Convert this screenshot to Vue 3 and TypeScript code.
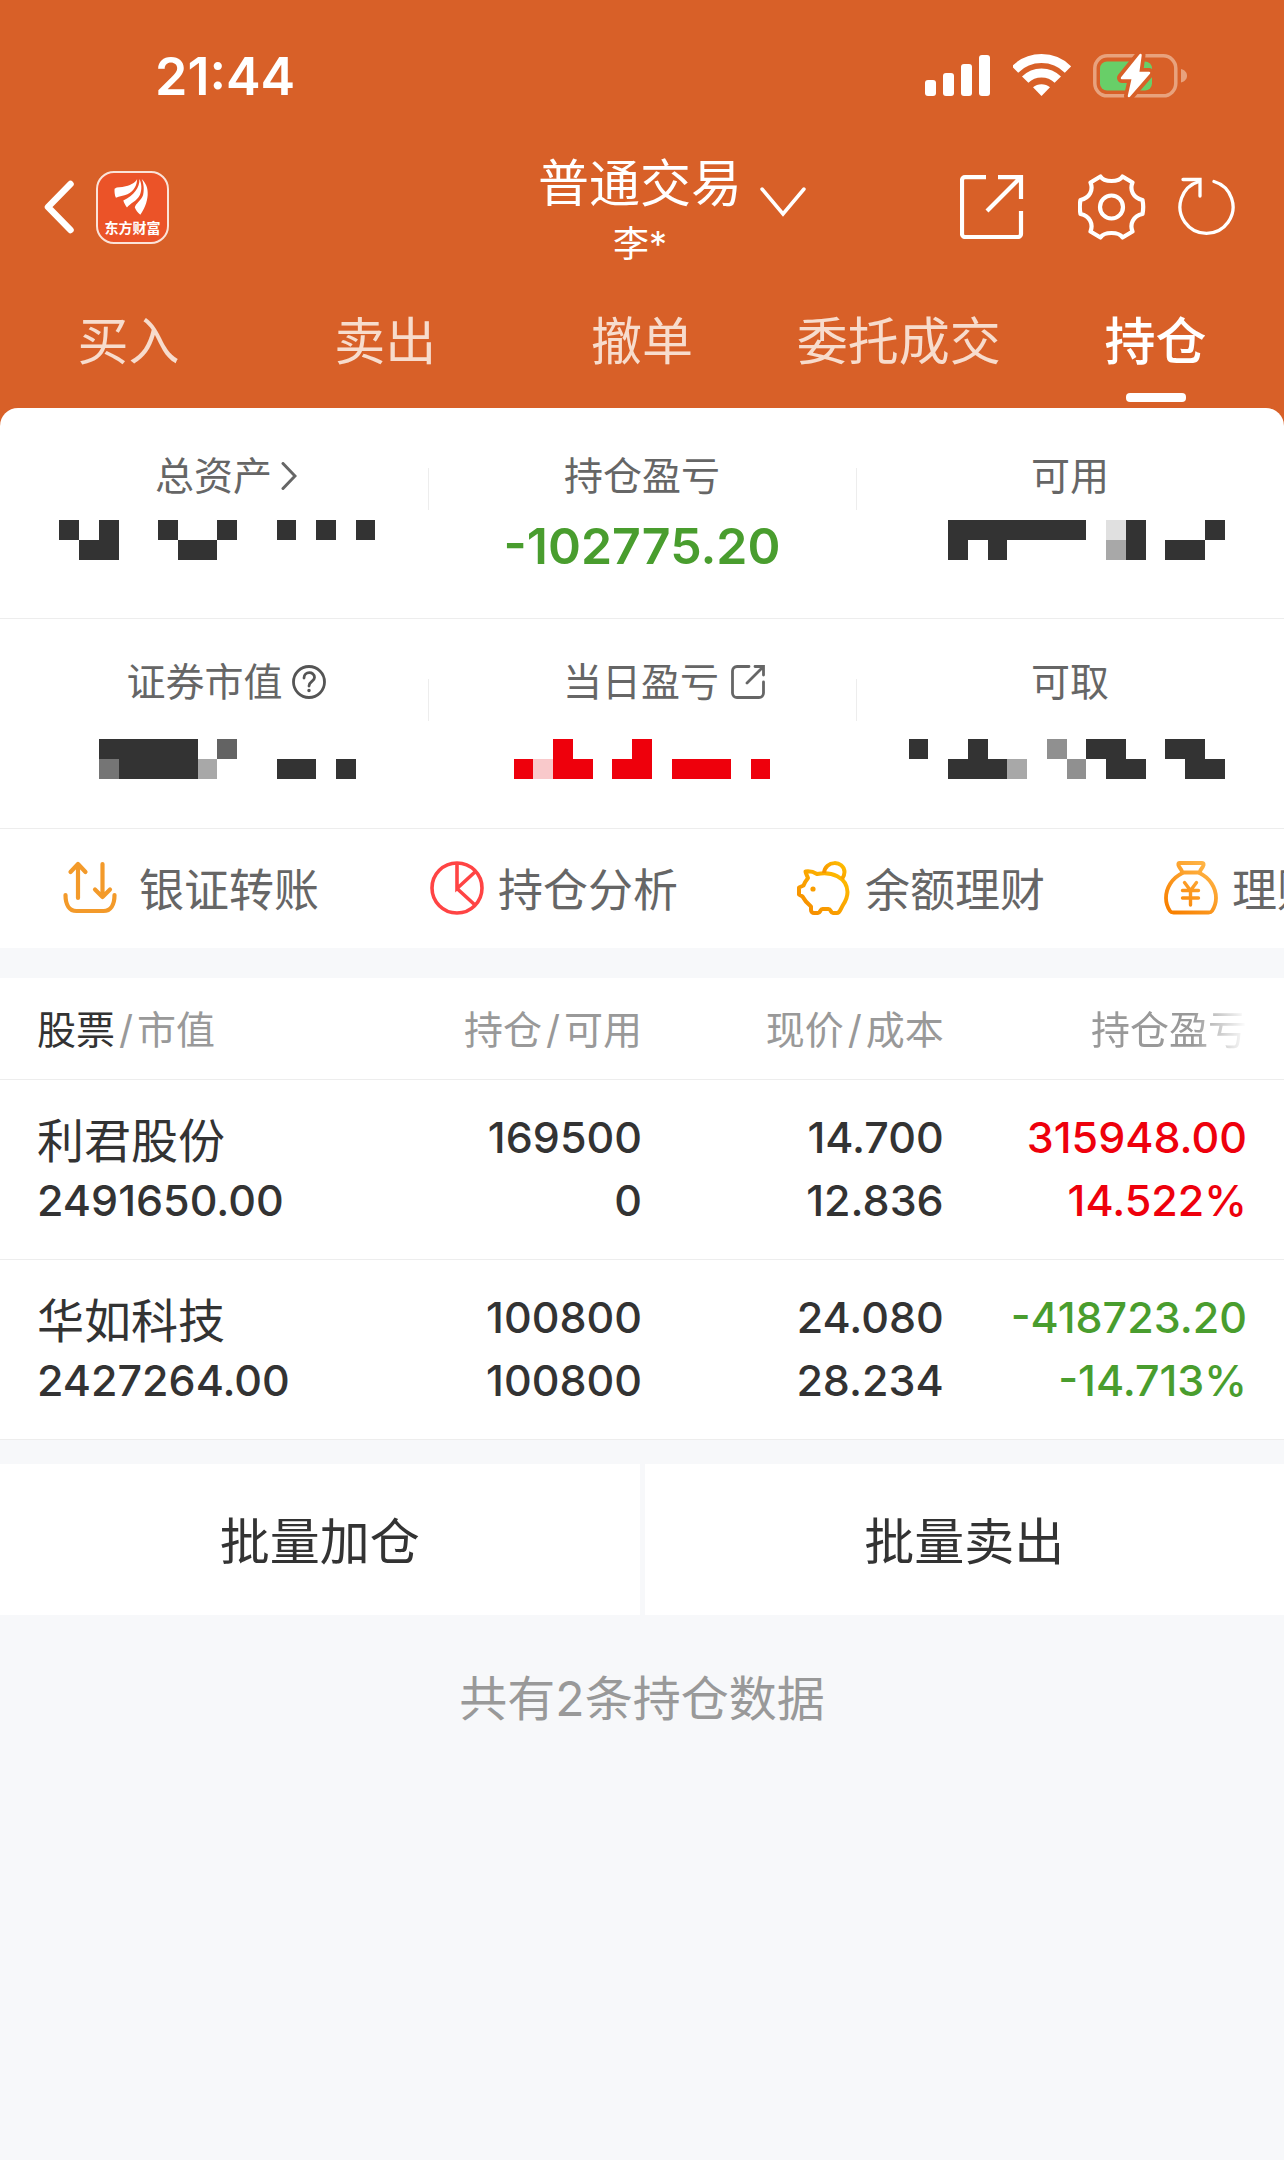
<script setup lang="ts">
interface Block {
  x: number
  row: 0 | 1
  w: number
  fill?: string
}

interface Stat {
  label: string
  icon?: 'chevron' | 'help' | 'share'
  value?: string
  tone?: string
  blocks?: Block[]
}

interface Holding {
  name: string
  marketValue: string
  amount: string
  available: string
  price: string
  cost: string
  profit: string
  rate: string
  tone: 'up' | 'down'
}

const tabs: string[] = ['买入', '卖出', '撤单', '委托成交', '持仓']
const activeTab = '持仓'

const statRows: Stat[][] = [
  [
    {
      label: '总资产',
      icon: 'chevron',
      tone: 'plain',
      blocks: [
        { x: 59, row: 0, w: 20 }, { x: 99, row: 0, w: 20 }, { x: 79, row: 1, w: 40 },
        { x: 158, row: 0, w: 20 }, { x: 217, row: 0, w: 20 }, { x: 178, row: 1, w: 39 },
        { x: 277, row: 0, w: 19 }, { x: 316, row: 0, w: 20 }, { x: 356, row: 0, w: 19 },
      ],
    },
    { label: '持仓盈亏', value: '-102775.20', tone: 'down' },
    {
      label: '可用',
      tone: 'plain',
      blocks: [
        { x: 92, row: 0, w: 138 }, { x: 92, row: 1, w: 20 }, { x: 132, row: 1, w: 19 },
        { x: 250, row: 0, w: 20, fill: '#e0e0e0' }, { x: 250, row: 1, w: 20, fill: '#a8a8a8' },
        { x: 270, row: 0, w: 20 }, { x: 270, row: 1, w: 20 },
        { x: 309, row: 1, w: 40 }, { x: 349, row: 0, w: 20 },
      ],
    },
  ],
  [
    {
      label: '证券市值',
      icon: 'help',
      tone: 'plain',
      blocks: [
        { x: 99, row: 0, w: 99 }, { x: 99, row: 1, w: 20, fill: '#757575' }, { x: 119, row: 1, w: 79 },
        { x: 198, row: 1, w: 19, fill: '#a8a8a8' }, { x: 217, row: 0, w: 20, fill: '#636363' },
        { x: 277, row: 1, w: 39 }, { x: 336, row: 1, w: 20 },
      ],
    },
    {
      label: '当日盈亏',
      icon: 'share',
      tone: 'up',
      blocks: [
        { x: 86, row: 1, w: 19 }, { x: 105, row: 1, w: 20, fill: '#f9c9cb' },
        { x: 125, row: 0, w: 20 }, { x: 125, row: 1, w: 40 },
        { x: 184, row: 1, w: 40 }, { x: 204, row: 0, w: 20 },
        { x: 244, row: 1, w: 59 }, { x: 323, row: 1, w: 19 },
      ],
    },
    {
      label: '可取',
      tone: 'plain',
      blocks: [
        { x: 53, row: 0, w: 19 }, { x: 112, row: 0, w: 20 }, { x: 92, row: 1, w: 59 },
        { x: 151, row: 1, w: 20, fill: '#a8a8a8' }, { x: 191, row: 0, w: 20, fill: '#909090' },
        { x: 211, row: 1, w: 19, fill: '#909090' }, { x: 230, row: 0, w: 40 }, { x: 250, row: 1, w: 40 },
        { x: 309, row: 0, w: 40 }, { x: 329, row: 1, w: 40 },
      ],
    },
  ],
]

const holdings: Holding[] = [
  {
    name: '利君股份', marketValue: '2491650.00', amount: '169500', available: '0',
    price: '14.700', cost: '12.836', profit: '315948.00', rate: '14.522%', tone: 'up',
  },
  {
    name: '华如科技', marketValue: '2427264.00', amount: '100800', available: '100800',
    price: '24.080', cost: '28.234', profit: '-418723.20', rate: '-14.713%', tone: 'down',
  },
]
</script>

<template>
  <div class="app">
    <div class="top">
      <div class="status">
        <span class="time">21:44</span>
        <div class="status-icons">
          <svg width="66" height="44" viewBox="0 0 66 44" fill="#fff" aria-hidden="true">
            <rect x="0" y="26" width="11" height="16" rx="3" />
            <rect x="18" y="19" width="11" height="23" rx="3" />
            <rect x="36" y="10" width="11" height="32" rx="3" />
            <rect x="54" y="1" width="11" height="41" rx="3" />
          </svg>
          <svg width="58" height="44" viewBox="0 0 58 44" fill="none" stroke="#fff" stroke-width="9" aria-hidden="true">
            <path d="M2 15.5a37.5 37.5 0 0 1 53 0" />
            <path d="M12.2 25.7a23 23 0 0 1 32.6 0" />
            <path d="M28.5 42 20 33.3a13 13 0 0 1 17 0Z" fill="#fff" stroke="none" />
          </svg>
          <svg width="94" height="46" viewBox="0 0 94 46" aria-hidden="true">
            <rect x="1.8" y="2.8" width="81" height="40" rx="12.5" fill="none" stroke="#e8a27d" stroke-width="3.5" />
            <rect x="7" y="8.5" width="52" height="29" rx="7" fill="#68cf68" />
            <path d="M88 16c8 2 8 11.500 0 13.500Z" fill="#e8a27d" />
            <path d="M47.500 2 29 25H40L36 43 56 20H45Z" fill="#d86028" stroke="#d86028" stroke-width="10" stroke-linejoin="round" />
            <path d="M47.500 2 29 25H40L36 43 56 20H45Z" fill="#fff" stroke="#fff" stroke-width="2.500" stroke-linejoin="round" />
          </svg>
        </div>
      </div>

      <header class="nav">
        <div class="nav-left">
          <button type="button" aria-label="返回">
            <svg width="30" height="54" viewBox="0 0 30 54" fill="none" stroke="#fff" stroke-width="6.500" stroke-linecap="round" stroke-linejoin="round">
              <path d="M26.500 4 4 27l22.500 23" />
            </svg>
          </button>
          <div class="logo">
            <svg width="73" height="50" viewBox="0 0 73 50" fill="#fff" aria-hidden="true">
              <path d="M17 17c3-2 7-1 12-2.500C36 12.500 40 10 41.500 6.500 41.500 13 38 20 31 23c-4 2-9 1.500-12.500 4C17 24 16.800 20 17 17Z" />
              <path d="M44 6.500C44.500 16 38 24 26.500 30c1 3 2 5 4 7.500C34 33 41 31 44.500 24c2.500-6 2-13-.5-17.500Z" />
              <path d="M46.500 6.500C51 11 53.500 16 53 24c-.5 8-4 16-8 21.500-3-2.500-5-5.500-6-8C40 33 46 30 48 24c1.500-7 .5-13-1.500-17.500Z" />
            </svg>
            <span>东方财富</span>
          </div>
        </div>
        <div class="title">
          <h1>
            <button type="button" class="account">
              普通交易
              <svg width="46" height="30" viewBox="0 0 46 30" fill="none" stroke="#fff" stroke-width="3.500" stroke-linecap="round" aria-hidden="true">
                <path d="M2 2l21 25L44 2" />
              </svg>
            </button>
          </h1>
          <p>李*</p>
        </div>
        <div class="nav-right">
          <button type="button" aria-label="分享">
            <svg width="64" height="64" viewBox="0 0 64 64" fill="none" stroke="#fff" stroke-width="4.200">
              <path d="M26 2.200H5a3 3 0 0 0-3 3V59a3 3 0 0 0 3 3h53a3 3 0 0 0 3-3V36" />
              <path d="M38 2.200h23V24M60 3 27 36" />
            </svg>
          </button>
          <button type="button" class="gear" aria-label="设置">
            <svg width="68" height="68" viewBox="0 0 68 68" fill="none" stroke="#fff" stroke-width="4.200" stroke-linejoin="round">
              <path d="M22.500 3.500C26 9.500 41 9.500 44.500 3.500L54.500 9.500C51.500 17 55 25 64.500 27C65.500 32 65.500 36 64.500 41C55 43 51.500 51 54.500 58.500L44.500 64.500C41 58.500 26 58.500 22.500 64.500L12.500 58.500C15.500 51 12 43 2.500 41C1.500 36 1.500 32 2.500 27C12 25 15.500 17 12.500 9.500Z" />
              <circle cx="33.500" cy="34" r="11.500" />
            </svg>
          </button>
          <button type="button" aria-label="刷新">
            <svg width="58" height="62" viewBox="0 0 58 62" fill="none" stroke="#fff" stroke-width="3.300" stroke-linecap="round">
              <path d="M36 5.500A26.500 26.500 0 1 1 21 5.500" />
              <path d="M5 3.500h17V20" />
            </svg>
          </button>
        </div>
      </header>

      <nav class="tabs">
        <button
          v-for="tab in tabs"
          :key="tab"
          type="button"
          class="tab"
          :class="{ active: tab === activeTab }"
        >
          {{ tab }}
        </button>
      </nav>

      <section class="summary">
        <div v-for="(row, r) in statRows" :key="r" class="stat-row">
          <div v-for="stat in row" :key="stat.label" class="stat">
            <div class="label">
              {{ stat.label }}
              <svg v-if="stat.icon === 'chevron'" class="hang" width="16" height="28" viewBox="0 0 16 28" fill="none" stroke="#666" stroke-width="3" stroke-linecap="round" aria-hidden="true">
                <path d="M2 1.500 14 14 2 26.500" />
              </svg>
              <svg v-else-if="stat.icon === 'help'" class="hang" width="34" height="34" viewBox="0 0 34 34" fill="none" stroke="#555" stroke-width="2.800" stroke-linecap="round" aria-hidden="true">
                <circle cx="17" cy="17" r="15.500" />
                <path d="M12 13c0-7 10.500-7 10.500-.5 0 4-5.500 4-5.500 8.500" />
                <circle cx="17" cy="25.500" r="1" fill="#555" stroke-width="1.500" />
              </svg>
              <svg v-else-if="stat.icon === 'share'" class="hang wide" width="34" height="34" viewBox="0 0 34 34" fill="none" stroke="#666" stroke-width="2.800" stroke-linecap="round" aria-hidden="true">
                <path d="M18 1.500H6A4.500 4.500 0 0 0 1.500 6v22A4.500 4.500 0 0 0 6 32.500h22a4.500 4.500 0 0 0 4.500-4.500V17" />
                <path d="M24 1.500h8.500v8.500M32 2 16 18" />
              </svg>
            </div>
            <strong v-if="stat.value" class="value" :class="stat.tone">{{ stat.value }}</strong>
            <svg v-else class="mask" :class="stat.tone" viewBox="0 0 428 40" shape-rendering="crispEdges" aria-hidden="true">
              <rect
                v-for="(b, i) in stat.blocks"
                :key="i"
                :x="b.x"
                :y="b.row * 20"
                :width="b.w"
                height="20"
                :fill="b.fill ?? 'currentColor'"
              />
            </svg>
          </div>
        </div>
      </section>
    </div>

    <nav class="actions">
      <button type="button" class="action">
        <svg width="62" height="54" viewBox="0 0 62 54" fill="none" stroke="#f39a2a" stroke-width="4.200" stroke-linecap="round" stroke-linejoin="round" aria-hidden="true">
          <path d="M2.500 34c0 10 4 16 11 16h27c7 0 11-6 11-16" />
          <path d="M15 37V4M7.500 11 15 3l7.500 8M39.500 3v33M32 28.500l7.500 7.500 7.500-7.500" />
        </svg>
        银证转账
      </button>
      <button type="button" class="action">
        <svg width="54" height="54" viewBox="0 0 54 54" fill="none" stroke="#ff4444" stroke-width="3.600" aria-hidden="true">
          <circle cx="27" cy="27" r="25" />
          <path d="M27 2v25.500l18.500-17M27 27.500 45 44" />
        </svg>
        持仓分析
      </button>
      <button type="button" class="action">
        <svg width="54" height="54" viewBox="0 0 54 54" fill="none" stroke="url(#pig)" stroke-width="4" stroke-linejoin="round" aria-hidden="true">
          <defs>
            <linearGradient id="pig" x1="1" y1="0" x2="0" y2="1">
              <stop offset="0" stop-color="#ffc000" />
              <stop offset="1" stop-color="#f58800" />
            </linearGradient>
          </defs>
          <path d="M20 13C16 10.500 12 10 8.500 10.500C9 13 10 14.500 11 17C9 19.500 7.500 22 6.500 24.500L2 26.500V33.500L5.500 35.500C7.500 39.500 11 43 14 45.500V49C14 51 15.500 52 17 52H21C23.500 52 23 48 25.500 48H31.500C34 48 33.500 52 36 52H40C43 52 43.500 48 46 44C49 39.500 50.500 35 50.500 31C50 16 34 10 20 13Z" />
          <path d="M27 12C28 -1 47 -1 47.500 11C47.500 14 46.500 16 45 18" />
          <circle cx="16" cy="28" r="2.600" fill="#f99d00" stroke="none" />
        </svg>
        余额理财
      </button>
      <button type="button" class="action">
        <svg width="54" height="54" viewBox="0 0 54 54" fill="none" stroke="url(#bag)" stroke-width="3.800" stroke-linejoin="round" stroke-linecap="round" aria-hidden="true">
          <defs>
            <linearGradient id="bag" gradientUnits="userSpaceOnUse" x1="46" y1="4" x2="8" y2="50">
              <stop offset="0" stop-color="#ffb648" />
              <stop offset="1" stop-color="#f88000" />
            </linearGradient>
          </defs>
          <path d="M15.500 2h22.500c2 0 2 2 1 3.500-1.500 2-2.500 3.500-3.500 6h-17c-1-2.500-2-4-3.500-6-1-1.500-1-3.500.5-3.500Z" />
          <path d="M18.500 12C8 17 2 27 2 37c0 6 2 10 4 13 1 1.500 2 1.500 3.500 1.500h35c1.500 0 2.500 0 3.500-1.500 2-3 4-7 4-13 0-10-6-20-16.500-25" />
          <path d="M20.500 21.500l6 8 6-8M26.500 29v15M18.500 29.500h16M18.500 37h16" stroke-width="3.400" />
        </svg>
        理财
      </button>
    </nav>

    <table class="holdings">
      <thead>
        <tr>
          <th scope="col"><b>股票</b><i>/</i>市值</th>
          <th scope="col">持仓<i>/</i>可用</th>
          <th scope="col">现价<i>/</i>成本</th>
          <th scope="col"><span class="fade">持仓盈亏</span></th>
        </tr>
      </thead>
      <tbody>
        <tr v-for="h in holdings" :key="h.name">
          <td><span class="name">{{ h.name }}</span><span>{{ h.marketValue }}</span></td>
          <td><span>{{ h.amount }}</span><span>{{ h.available }}</span></td>
          <td><span>{{ h.price }}</span><span>{{ h.cost }}</span></td>
          <td :class="h.tone"><span>{{ h.profit }}</span><span>{{ h.rate }}</span></td>
        </tr>
      </tbody>
    </table>

    <div class="batch">
      <button type="button">批量加仓</button>
      <button type="button">批量卖出</button>
    </div>

    <p class="count">共有2条持仓数据</p>
  </div>
</template>

<style>
body {
  margin: 0;
  background: #f7f8fa;
}
</style>

<style scoped>
.app {
  overflow: hidden;
  color: #333;
  font-family: Inter, "Noto Sans CJK SC", sans-serif;
}

button {
  padding: 0;
  border: 0;
  background: none;
  color: inherit;
  font: inherit;
  white-space: nowrap;
}

svg {
  display: block;
  flex: none;
}

.top {
  background: #d86028;
}

.status {
  display: flex;
  justify-content: space-between;
  align-items: center;
  padding: 44px 97px 36px 155px;
  color: #fff;
}

.time {
  font-size: 52px;
  font-weight: 600;
  line-height: 66px;
}

.status-icons {
  display: flex;
  align-items: center;
  gap: 22px;
  padding-bottom: 2px;
}

.nav {
  display: grid;
  grid-template-columns: 1fr auto 1fr;
  align-items: center;
  height: 122px;
  padding: 0 48px 0 44px;
  color: #fff;
}

.nav-left,
.nav-right {
  display: flex;
  align-items: center;
}

.nav-left {
  gap: 22px;
}

.nav-right {
  justify-content: flex-end;
  gap: 32px;
}

.gear {
  margin-left: 22px;
}

.logo {
  display: flex;
  flex-direction: column;
  align-items: center;
  box-sizing: border-box;
  width: 73px;
  height: 73px;
  border: 2px solid #fbe3d8;
  border-radius: 18px;
  background: #eb5328;
}

.logo svg {
  height: 46px;
}

.logo span {
  font-size: 14px;
  font-weight: 700;
  line-height: 18px;
}

.title {
  padding-top: 2px;
  text-align: center;
}

.title h1 {
  margin: 0;
  font-size: 51px;
  font-weight: 400;
  line-height: 72px;
}

.account {
  position: relative;
}

.account svg {
  position: absolute;
  top: 39px;
  left: 100%;
  margin-left: 18px;
}

.title p {
  margin: 0;
  font-size: 36px;
  line-height: 48px;
}

.tabs {
  display: grid;
  grid-template-columns: repeat(5, 1fr);
}

.tab {
  position: relative;
  padding: 38px 0 30px;
  color: #f7dccd;
  font-size: 51px;
  line-height: 72px;
}

.tab.active {
  color: #fff;
  font-weight: 500;
}

.tab.active::after {
  content: "";
  position: absolute;
  bottom: 6px;
  left: 50%;
  width: 60px;
  height: 9px;
  margin-left: -30px;
  border-radius: 4px;
  background: #fff;
}

.summary {
  border-radius: 18px 18px 0 0;
  background: #fff;
}

.stat-row {
  display: grid;
  grid-template-columns: repeat(3, 1fr);
  height: 210px;
  border-bottom: 1px solid #ededed;
}

.stat-row + .stat-row {
  height: 209px;
}

.stat {
  position: relative;
  display: flex;
  flex-direction: column;
  align-items: center;
  padding-top: 42px;
}

.stat + .stat::before {
  content: "";
  position: absolute;
  top: 60px;
  left: 0;
  width: 1px;
  height: 42px;
  background: #ededed;
}

.label {
  display: flex;
  align-items: center;
  color: #666;
  font-size: 39px;
  line-height: 52px;
}

.hang {
  margin-right: -24px;
  margin-left: 9px;
}

.hang.wide {
  margin-right: -44px;
  margin-left: 12px;
}

.value {
  margin-top: 14px;
  font-size: 50px;
  font-weight: 600;
  line-height: 60px;
}

.mask {
  width: 100%;
  margin-top: 18px;
}

.stat-row + .stat-row .stat {
  padding-top: 37px;
}

.stat-row + .stat-row .mask {
  margin-top: 31px;
}

.plain {
  color: #333;
}

.up {
  color: #ee000c;
}

.down {
  color: #499d2e;
}

.actions {
  display: flex;
  overflow: hidden;
  padding-left: 63px;
  background: #fff;
}

.action {
  display: flex;
  flex: none;
  align-items: center;
  gap: 14px;
  width: 367px;
  height: 119px;
  padding-bottom: 2px;
  color: #666;
  font-size: 45px;
}

.holdings {
  width: 100%;
  margin-top: 30px;
  border-collapse: collapse;
  table-layout: fixed;
  background: #fff;
}

.holdings th,
.holdings td {
  box-sizing: border-box;
  padding: 0;
  border-bottom: 1px solid #ededed;
  text-align: right;
  white-space: nowrap;
}

.holdings th {
  width: 22%;
  height: 101px;
  padding-bottom: 2px;
  color: #999;
  font-size: 39px;
  font-weight: 400;
}

.holdings th:first-child {
  width: 28%;
}

.holdings th:nth-child(3) {
  width: 23.5%;
}

.holdings th:last-child {
  width: 26.5%;
}

.holdings th b {
  color: #333;
  font-weight: 400;
}

.holdings th i {
  margin: 0 4px;
  font-style: normal;
}

.holdings td {
  padding: 26px 0 27px;
  font-size: 43px;
  font-weight: 500;
}

.holdings tr > :first-child {
  padding-left: 37px;
  text-align: left;
}

.holdings tr > :last-child {
  padding-right: 37px;
}

.holdings td span {
  display: block;
  line-height: 63px;
}

.holdings .name {
  font-family: "Noto Sans CJK SC", sans-serif;
  font-size: 47px;
  font-weight: 400;
}

.fade {
  -webkit-mask-image: linear-gradient(to right, #000 65%, transparent);
  mask-image: linear-gradient(to right, #000 65%, transparent);
}

.batch {
  display: grid;
  grid-template-columns: 1fr 1fr;
  gap: 5px;
  margin-top: 24px;
}

.batch button {
  height: 151px;
  padding-bottom: 2px;
  background: #fff;
  font-size: 50px;
}

.count {
  margin: 0;
  padding: 48px 0;
  color: #999;
  font-size: 48px;
  line-height: 72px;
  text-align: center;
}
</style>
